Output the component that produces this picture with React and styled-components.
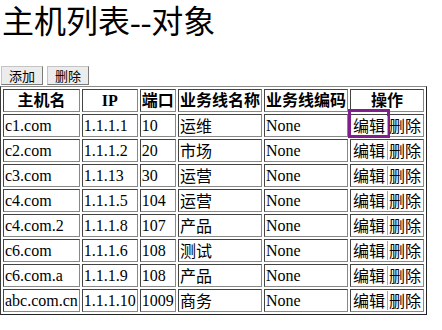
import styled, { createGlobalStyle } from "styled-components";

const GlobalStyle = createGlobalStyle`
  body {
    margin: 0;
    background: #fff;
    color: #000;
    font-family: "Liberation Serif", "Noto Sans CJK SC", serif;
  }
`;

const Page = styled.div`
  padding: 0;
`;

const Title = styled.h1`
  margin: 0 0 22px 2px;
  font-size: 32px;
  line-height: 44px;
  font-weight: normal;
  font-family: "Liberation Serif", "Noto Sans CJK SC", serif;
`;

const Toolbar = styled.div`
  display: flex;
  gap: 4px;
  padding-left: 1px;
  margin-bottom: 1px;
`;

const Button = styled.button`
  height: 19px;
  padding: 0 7px;
  font-size: 13px;
  line-height: 17px;
  font-family: "Noto Sans CJK SC", sans-serif;
  color: #000;
  background: #ececec;
  border: 1px solid;
  border-color: #c4c4c4 #7a7a7a #7a7a7a #c4c4c4;
  border-radius: 0;
`;

const Table = styled.table`
  border-collapse: separate;
  border-spacing: 2px;
  border: 1px solid;
  border-color: #8a8a8a #222 #222 #3a3a3a;
`;

const Th = styled.th`
  border: 1px solid;
  border-color: #444 #888 #888 #444;
  padding: 1px;
  font-size: 16px;
  line-height: 19px;
  font-weight: bold;
  text-align: center;
  white-space: nowrap;
  font-family: "Liberation Serif", "Noto Sans CJK SC", serif;
`;

const Td = styled.td`
  border: 1px solid;
  border-color: #444 #888 #888 #444;
  padding: 1px;
  font-size: 16px;
  line-height: 19px;
  white-space: nowrap;
  font-family: ${(p) =>
    p.$cjk
      ? `"Noto Sans CJK SC", sans-serif`
      : `"Liberation Serif", "Noto Sans CJK SC", serif`};
`;

const Action = styled.span`
  position: relative;
  display: inline-block;
  padding: 0 1px;
  font-family: "Noto Sans CJK SC", sans-serif;
  ${(p) => p.$sep && `border-left: 1px solid #a8a8a8; margin-left: 1px;`}

  ${(p) =>
    p.$focused &&
    `&::after {
      content: "";
      position: absolute;
      top: -7px;
      bottom: -3px;
      left: -4px;
      right: -4px;
      border: 3px solid #7e1f8c;
    }`}
`;

const hosts = [
  ["c1.com", "1.1.1.1", "10", "运维"],
  ["c2.com", "1.1.1.2", "20", "市场"],
  ["c3.com", "1.1.13", "30", "运营"],
  ["c4.com", "1.1.1.5", "104", "运营"],
  ["c4.com.2", "1.1.1.8", "107", "产品"],
  ["c6.com", "1.1.1.6", "108", "测试"],
  ["c6.com.a", "1.1.1.9", "108", "产品"],
  ["abc.com.cn", "1.1.1.10", "1009", "商务"],
];

export default function App() {
  return (
    <Page>
      <GlobalStyle />
      <Title>主机列表--对象</Title>
      <Toolbar>
        <Button>添加</Button>
        <Button>删除</Button>
      </Toolbar>
      <Table>
        <thead>
          <tr>
            <Th>主机名</Th>
            <Th>IP</Th>
            <Th>端口</Th>
            <Th>业务线名称</Th>
            <Th>业务线编码</Th>
            <Th>操作</Th>
          </tr>
        </thead>
        <tbody>
          {hosts.map(([host, ip, port, line], i) => (
            <tr key={host}>
              <Td>{host}</Td>
              <Td>{ip}</Td>
              <Td>{port}</Td>
              <Td $cjk>{line}</Td>
              <Td>None</Td>
              <Td $cjk>
                <Action $focused={i === 0}>编辑</Action>
                <Action $sep>删除</Action>
              </Td>
            </tr>
          ))}
        </tbody>
      </Table>
    </Page>
  );
}
